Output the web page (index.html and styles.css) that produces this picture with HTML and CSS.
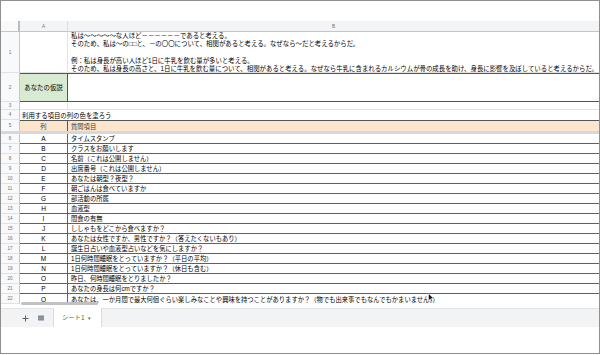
FILE: index.html
```html
<!DOCTYPE html>
<html lang="ja">
<head>
<meta charset="utf-8">
<title>Sheet</title>
<link rel="stylesheet" href="styles.css">
</head>
<body>
<div class="sheet">
  <div class="toolbar"></div>
  <div class="row colhead">
    <div class="rh corner"></div>
    <div class="ca hd">A</div>
    <div class="cb hd center">B</div>
  </div>
  <div class="row r1">
    <div class="rh">1</div>
    <div class="ca light"></div>
    <div class="cb multi">私は～～～～～な人ほど－－－－－－であると考える。<br>そのため、私は～の□□と、－の〇〇について、相関があると考える。なぜなら～だと考えるからだ。<br>&nbsp;<br>例：私は身長が高い人ほど1日に牛乳を飲む量が多いと考える。<br>そのため、私は身長の高さと、1日に牛乳を飲む量について、相関があると考える。なぜなら牛乳に含まれるカルシウムが骨の成長を助け、身長に影響を及ぼしていると考えるからだ。</div>
  </div>
  <div class="row r2">
    <div class="rh">2</div>
    <div class="ca green">あなたの仮説</div>
    <div class="cb"></div>
  </div>
  <div class="row r3">
    <div class="rh">3</div>
    <div class="ca light"></div>
    <div class="cb"></div>
  </div>
  <div class="row r4">
    <div class="rh">4</div>
    <div class="span">利用する項目の列の色を塗ろう</div>
  </div>
  <div class="row r5">
    <div class="rh">5</div>
    <div class="ca">列</div>
    <div class="cb">質問項目</div>
  </div>
  <div class="freeze"></div>
  <div class="row d"><div class="rh">6</div><div class="ca">A</div><div class="cb">タイムスタンプ</div></div>
  <div class="row d"><div class="rh">7</div><div class="ca">B</div><div class="cb">クラスをお願いします</div></div>
  <div class="row d"><div class="rh">8</div><div class="ca">C</div><div class="cb">名前（これは公開しません）</div></div>
  <div class="row d"><div class="rh">9</div><div class="ca">D</div><div class="cb">出席番号（これは公開しません）</div></div>
  <div class="row d"><div class="rh">10</div><div class="ca">E</div><div class="cb">あなたは朝型？夜型？</div></div>
  <div class="row d"><div class="rh">11</div><div class="ca">F</div><div class="cb">朝ごはんは食べていますか</div></div>
  <div class="row d"><div class="rh">12</div><div class="ca">G</div><div class="cb">部活動の所属</div></div>
  <div class="row d"><div class="rh">13</div><div class="ca">H</div><div class="cb">血液型</div></div>
  <div class="row d"><div class="rh">14</div><div class="ca">I</div><div class="cb">間食の有無</div></div>
  <div class="row d"><div class="rh">15</div><div class="ca">J</div><div class="cb">ししゃもをどこから食べますか？</div></div>
  <div class="row d"><div class="rh">16</div><div class="ca">K</div><div class="cb">あなたは女性ですか、男性ですか？（答えたくないもあり）</div></div>
  <div class="row d"><div class="rh">17</div><div class="ca">L</div><div class="cb">誕生日占いや血液型占いなどを気にしますか？</div></div>
  <div class="row d"><div class="rh">18</div><div class="ca">M</div><div class="cb">1日何時間睡眠をとっていますか？（平日の平均）</div></div>
  <div class="row d"><div class="rh">19</div><div class="ca">N</div><div class="cb">1日何時間睡眠をとっていますか？（休日も含む）</div></div>
  <div class="row d"><div class="rh">20</div><div class="ca">O</div><div class="cb">昨日、何時間睡眠をとりましたか？</div></div>
  <div class="row d"><div class="rh">21</div><div class="ca">P</div><div class="cb">あなたの身長は何cmですか？</div></div>
  <div class="row d last"><div class="rh">22</div><div class="ca">Q</div><div class="cb">あなたは、一か月間で最大何個ぐらい楽しみなことや興味を持つことがありますか？（物でも出来事でもなんでもかまいません。）</div></div>
  <div class="scroll"><div class="thumb"></div></div>
  <div class="tabbar">
    <div class="tools">
      <svg class="plus" width="7" height="7" viewBox="0 0 7 7"><path d="M3.5 0.5v6M0.5 3.5h6" stroke="#5f6368" stroke-width="1"/></svg>
      <svg class="list" width="6" height="6" viewBox="0 0 6 6"><rect x="0" y="0.5" width="6" height="5" fill="#80868b"/><path d="M0 2.2h6M0 3.8h6" stroke="#b0b4b8" stroke-width="0.5"/></svg>
    </div>
    <div class="tab">シート1<span class="caret">▾</span></div>
  </div>
  <div class="foot"></div>
  <svg class="cursor" width="6" height="9" viewBox="0 0 6 9"><path d="M0.5 0.5v7l1.8-1.6 1.2 2.6 1-0.5-1.2-2.5h2.3z" fill="#111" stroke="#fff" stroke-width="0.5"/></svg>
</div>
</body>
</html>
```

FILE: styles.css
```css
html, body {
  margin: 0;
  padding: 0;
  background: #ffffff;
}
body {
  font-family: "Liberation Sans", "Noto Sans CJK JP", sans-serif;
  color: #000;
}
.sheet {
  position: relative;
  width: 600px;
  height: 354px;
  box-sizing: border-box;
  border: 1px solid #8f8f8f;
  display: flex;
  flex-direction: column;
  background: #fff;
  overflow: hidden;
}
.toolbar {
  height: 20px;
  flex: none;
}
.row {
  display: flex;
  flex: none;
  font-size: 6.3px;
}
.rh {
  width: 19px;
  flex: none;
  box-sizing: border-box;
  background: #f8f9fa;
  border-right: 1px solid #c4c7c5;
  border-bottom: 1px solid #e1e3e1;
  color: #6b6f72;
  font-size: 4.6px;
  display: flex;
  align-items: center;
  justify-content: center;
}
.ca {
  width: 48px;
  flex: none;
  box-sizing: border-box;
  display: flex;
  align-items: center;
  justify-content: center;
  white-space: nowrap;
}
.cb {
  flex: 1;
  box-sizing: border-box;
  display: flex;
  align-items: center;
  padding-left: 3px;
  white-space: nowrap;
  overflow: hidden;
}
.center { justify-content: center; padding-left: 0; }

/* column header */
.colhead { height: 11px; }
.colhead .rh { border-right: 2px solid #b9bcbf; border-bottom: 1px solid #c4c7c5; }
.hd {
  background: #f3f4f6;
  border-bottom: 1px solid #c4c7c5;
  border-right: 1px solid #dadce0;
  color: #6b6f72;
  font-size: 4.6px;
}
.colhead .cb { border-right: none; }

/* row 1 */
.r1 { height: 41px; }
.light { border-right: 1px solid #e1e3e1; border-bottom: 1px solid #e1e3e1; }
.multi {
  display: block;
  line-height: 8.3px;
  padding-top: 0;
  font-size: 6.42px;
  border-bottom: 1px solid #e1e3e1;
}

/* row 2 */
.r2 { height: 29px; }
.r2 .ca, .r2 .cb {
  border-top: 1px solid #555;
  border-bottom: 1px solid #555;
}
.r2 .ca { border-right: 1px solid #555; }
.green { background: #d9ead3; font-size: 6.4px; }

/* row 3 */
.r3 { height: 8px; }
.r3 .cb { border-bottom: 1px solid #e1e3e1; }

/* row 4 */
.r4 { height: 10px; }
.span {
  flex: 1;
  display: flex;
  align-items: center;
  padding-left: 2px;
  font-size: 6.4px;
  white-space: nowrap;
}
/* row 5 */
.r5 { height: 11px; }
.r5 .ca, .r5 .cb {
  background: #fce5cd;
  border-top: 1px solid #555;
  color: #3c3c3c;
}
.r5 .ca { border-right: 1px solid #555; }
.r5 .rh { border-bottom: none; }

.freeze {
  height: 3px;
  flex: none;
  background: #d6d8da;
}

/* data rows */
.d { height: 10px; }
.d .ca, .d .cb { border-bottom: 1px solid #606060; }
.d .ca { border-right: 1px solid #606060; font-size: 6.5px; color: #000; }
.d .cb { line-height: 9px; }
.d.last .ca, .d.last .cb { border-bottom: none; }

.scroll {
  height: 4px;
  flex: none;
  position: relative;
}
.thumb {
  position: absolute;
  left: 20px;
  top: -2px;
  width: 77px;
  height: 3px;
  border-radius: 2px;
  background: #c1c1c1;
}

/* tab bar */
.tabbar {
  height: 19px;
  flex: none;
  box-sizing: border-box;
  background: #f1f3f4;
  border-top: 1px solid #e3e3e3;
  display: flex;
  align-items: stretch;
}
.tools {
  width: 52px;
  flex: none;
  display: flex;
  align-items: center;
  padding-left: 21px;
  gap: 9px;
  box-sizing: border-box;
}
.tab {
  width: 49px;
  flex: none;
  box-sizing: border-box;
  background: #fff;
  border-left: 1px solid #dadce0;
  border-right: 1px solid #dadce0;
  margin-top: -1px;
  color: #188038;
  font-size: 6.3px;
  display: flex;
  align-items: center;
  padding-left: 8px;
  font-family: "Noto Sans CJK JP", sans-serif;
}
.caret {
  font-size: 4.5px;
  margin-left: 4px;
  color: #188038;
}
.foot {
  flex: 1;
}
.cursor {
  position: absolute;
  left: 427px;
  top: 292px;
}
```
